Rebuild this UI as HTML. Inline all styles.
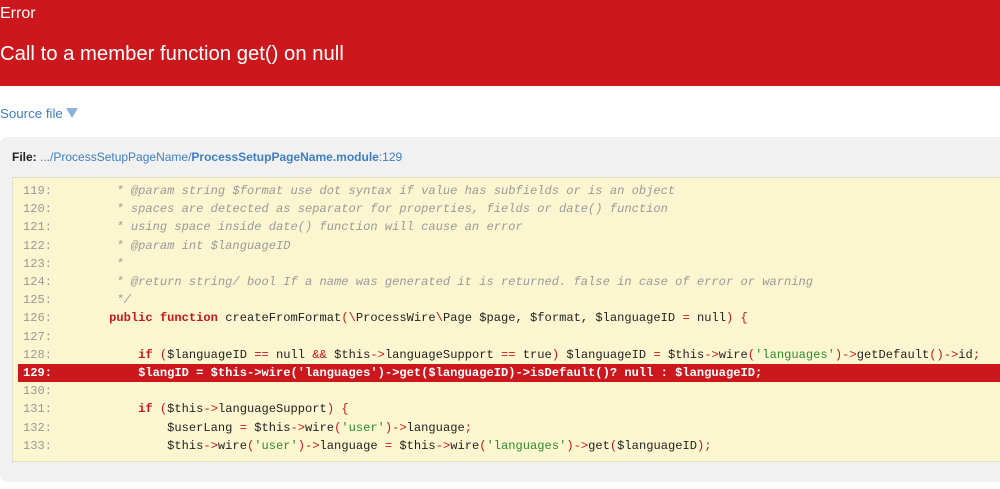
<!DOCTYPE html>
<html><head><meta charset="utf-8"><style>
body{margin:0;width:1000px;height:489px;overflow:hidden;background:#fff;font-family:"Liberation Sans",Arial,sans-serif;}
.hd{background:#cc171c;height:86px;color:#fff;position:relative}
.hd .e{position:absolute;left:0;top:5px;font-size:16px}
.hd .t{position:absolute;left:0;top:43px;font-size:20.3px}
.src{position:absolute;left:0;top:106px;font-size:13.3px;color:#3c7fc4}
.tri{display:inline-block;width:0;height:0;border-left:6px solid transparent;border-right:6px solid transparent;border-top:10px solid #8bb3dc;margin-left:3px;vertical-align:0px}
.box{position:absolute;left:0;top:137px;width:1008px;height:345px;background:#f1f1f1;border-radius:8px}
.file{position:absolute;left:12px;top:150px;font-size:12px;color:#3c7fc4}
.file b.k{color:#222}
.code{position:absolute;left:12px;top:177px;width:1000px;height:283px;background:#fcf6d0;border:1px dotted #ccc;font-family:"Liberation Mono",monospace;font-size:12.1px;}
.l{position:absolute;left:0;height:18.2px;line-height:18.2px;white-space:pre;width:1000px}
.n{position:absolute;left:10px;color:#999}
.c{position:absolute;left:38px;color:#222}
.cm{color:#999;font-style:italic}
.k{color:#c8161d;font-weight:bold}
.o{color:#c8161d}
.s{color:#2e8b2e}
.hl{background:#cc171c;left:5px;width:995px}
.hl .n,.hl .c{color:#fff;font-weight:bold}
.hl .n{left:5px}.hl .c{left:33px}
</style></head><body>
<div class="hd"><div class="e">Error</div><div class="t">Call to a member function get() on null</div></div>
<div class="src">Source file<span class="tri"></span></div>
<div class="box"></div>
<div class="file"><b class="k">File:</b> .../ProcessSetupPageName/<b>ProcessSetupPageName.module</b>:129</div>
<div class="code">
<div class="l" style="top:4px"><span class="n">119:</span><span class="c cm">         * @param string $format use dot syntax if value has subfields or is an object</span></div>
<div class="l" style="top:22.2px"><span class="n">120:</span><span class="c cm">         * spaces are detected as separator for properties, fields or date() function</span></div>
<div class="l" style="top:40.4px"><span class="n">121:</span><span class="c cm">         * using space inside date() function will cause an error</span></div>
<div class="l" style="top:58.6px"><span class="n">122:</span><span class="c cm">         * @param int $languageID</span></div>
<div class="l" style="top:76.8px"><span class="n">123:</span><span class="c cm">         *</span></div>
<div class="l" style="top:95px"><span class="n">124:</span><span class="c cm">         * @return string/ bool If a name was generated it is returned. false in case of error or warning</span></div>
<div class="l" style="top:113.2px"><span class="n">125:</span><span class="c cm">         */</span></div>
<div class="l" style="top:131.4px"><span class="n">126:</span><span class="c">        <span class="k">public function</span> createFromFormat<span class="o">(\</span>ProcessWire<span class="o">\</span>Page $page, $format, $languageID <span class="o">=</span> null<span class="o">) {</span></span></div>
<div class="l" style="top:149.6px"><span class="n">127:</span></div>
<div class="l" style="top:167.8px"><span class="n">128:</span><span class="c">            <span class="k">if</span> <span class="o">(</span>$languageID <span class="o">==</span> null <span class="o">&amp;&amp;</span> $this<span class="o">-&gt;</span>languageSupport <span class="o">==</span> true<span class="o">)</span> $languageID <span class="o">=</span> $this<span class="o">-&gt;</span>wire<span class="o">(</span><span class="s">'languages'</span><span class="o">)-&gt;</span>getDefault<span class="o">()-&gt;</span>id<span class="o">;</span></span></div>
<div class="l hl" style="top:186px"><span class="n">129:</span><span class="c">            $langID = $this-&gt;wire('languages')-&gt;get($languageID)-&gt;isDefault()? null : $languageID;</span></div>
<div class="l" style="top:204.2px"><span class="n">130:</span></div>
<div class="l" style="top:222.4px"><span class="n">131:</span><span class="c">            <span class="k">if</span> <span class="o">(</span>$this<span class="o">-&gt;</span>languageSupport<span class="o">) {</span></span></div>
<div class="l" style="top:240.6px"><span class="n">132:</span><span class="c">                $userLang <span class="o">=</span> $this<span class="o">-&gt;</span>wire<span class="o">(</span><span class="s">'user'</span><span class="o">)-&gt;</span>language<span class="o">;</span></span></div>
<div class="l" style="top:258.8px"><span class="n">133:</span><span class="c">                $this<span class="o">-&gt;</span>wire<span class="o">(</span><span class="s">'user'</span><span class="o">)-&gt;</span>language <span class="o">=</span> $this<span class="o">-&gt;</span>wire<span class="o">(</span><span class="s">'languages'</span><span class="o">)-&gt;</span>get<span class="o">(</span>$languageID<span class="o">);</span></span></div>
</div>
</body></html>
